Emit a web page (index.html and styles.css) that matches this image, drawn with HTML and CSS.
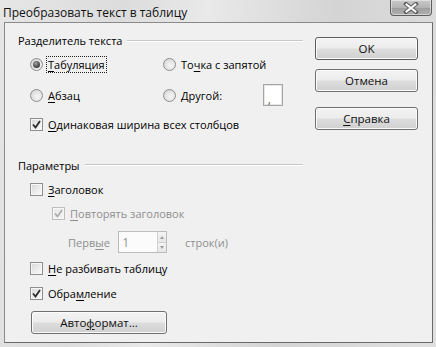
FILE: index.html
```html
<!DOCTYPE html>
<html lang="ru">
<head>
<meta charset="utf-8">
<title>Преобразовать текст в таблицу</title>
<link rel="stylesheet" href="styles.css">
</head>
<body>
<div class="window">
  <div class="titlebar">
    <span class="title">Преобразовать текст в таблицу</span>
    <span class="close">
      <svg width="16" height="12" viewBox="0 0 16 12"><path d="M3 2 L13 10 M13 2 L3 10" stroke="#5a5a5a" stroke-width="4" stroke-linecap="square"/><path d="M3.5 2.5 L12.5 9.5 M12.5 2.5 L3.5 9.5" stroke="#ffffff" stroke-width="2" stroke-linecap="square"/></svg>
    </span>
  </div>
  <div class="client">
    <div class="options">
      <div class="group-head head1"><span>Разделитель текста</span><span class="rule"></span></div>

      <div class="row r1">
        <span class="opt col1"><span class="radio checked"></span><span class="focus"><u>Т</u>абуляция</span></span>
        <span class="opt col2"><span class="radio"></span><span>То<u>ч</u>ка с запятой</span></span>
      </div>

      <div class="row r2">
        <span class="opt col1"><span class="radio"></span><span><u>А</u>бзац</span></span>
        <span class="opt col2"><span class="radio"></span><span><u>Д</u>ругой:</span></span>
        <span class="textbox">,</span>
      </div>

      <div class="row r3">
        <span class="opt"><span class="check on"><svg width="9" height="9" viewBox="0 0 9 9"><path d="M1 4.5 L3.5 7.5 L8 1" fill="none" stroke="#2b2b2b" stroke-width="1.8"/></svg></span><span><u>О</u>динаковая ширина всех столбцов</span></span>
      </div>

      <div class="group-head head2"><span>Параметры</span><span class="rule"></span></div>

      <div class="row r4">
        <span class="opt"><span class="check"></span><span><u>З</u>аголовок</span></span>
      </div>

      <div class="row r5 disabled">
        <span class="opt"><span class="check dis"><svg width="9" height="9" viewBox="0 0 9 9"><path d="M1 4.5 L3.5 7.5 L8 1" fill="none" stroke="#a8a8a8" stroke-width="1.6"/></svg></span><span><u>П</u>овторять заголовок</span></span>
      </div>

      <div class="row r6 disabled">
        <span class="first-label">Перв<u>ы</u>е</span>
        <span class="spin"><span class="spin-val">1</span><span class="spin-btns"><span class="sb up"></span><span class="sb down"></span></span></span>
        <span class="rows-label">строк(и)</span>
      </div>

      <div class="row r7">
        <span class="opt"><span class="check"></span><span><u>Н</u>е разбивать таблицу</span></span>
      </div>

      <div class="row r8">
        <span class="opt"><span class="check on"><svg width="9" height="9" viewBox="0 0 9 9"><path d="M1 4.5 L3.5 7.5 L8 1" fill="none" stroke="#2b2b2b" stroke-width="1.8"/></svg></span><span>Обра<u>м</u>ление</span></span>
      </div>

      <div class="row r9">
        <span class="btn autoformat">Авто<u>ф</u>ормат...</span>
      </div>
    </div>

    <div class="actions">
      <span class="btn ok">OK</span>
      <span class="btn cancel">Отмена</span>
      <span class="btn help"><u>С</u>правка</span>
    </div>
  </div>
</div>
</body>
</html>
```

FILE: styles.css
```css
* { box-sizing: border-box; }
html, body { margin: 0; padding: 0; }
body {
  width: 436px;
  height: 347px;
  overflow: hidden;
  font-family: "Open Sans", "Noto Sans", sans-serif;
  font-size: 11px;
  color: #000;
  background: #dcdcdc;
}
u { text-decoration: underline; text-underline-offset: 2px; }

.window {
  width: 436px;
  height: 347px;
  display: flex;
  flex-direction: column;
  padding: 0 3px 4px 4px;
  background: linear-gradient(100deg, #e6e6e6 0%, #dcdcdc 25%, #e9e9e9 42%, #d4d4d4 68%, #e0e0e0 100%);
}

.titlebar {
  height: 22px;
  display: flex;
  justify-content: space-between;
  align-items: flex-start;
}
.title {
  margin-left: -1px;
  padding-top: 4px;
  line-height: 17px;
  font-size: 12px;
  color: #111;
}
.close {
  width: 42px;
  height: 16px;
  margin-right: 1px;
  border: 1px solid #5e5e5e;
  border-top: none;
  border-radius: 0 0 4px 4px;
  background: linear-gradient(#c9c9c9 0%, #b4b4b4 50%, #9d9d9d 51%, #b0b0b0 100%);
  box-shadow: inset 0 0 0 1px rgba(255,255,255,0.45);
  display: flex;
  align-items: center;
  justify-content: center;
}

.client {
  flex: 1;
  display: flex;
  background: #f0f0f0;
  border: 1px solid #8a8a8a;
  border-right-color: #6a6a6a;
  border-bottom-color: #6a6a6a;
}

.options {
  width: 298px;
  padding: 8px 0 0 13px;
  display: flex;
  flex-direction: column;
}

.group-head {
  height: 19px;
  display: flex;
  align-items: center;
  gap: 5px;
  white-space: nowrap;
}
.group-head .rule {
  flex: 1;
  height: 1px;
  background: #c8c8c8;
  border-bottom: 1px solid #fff;
  box-sizing: content-box;
}

.row {
  display: flex;
  align-items: center;
  height: 20px;
  margin-left: 12px;
  white-space: nowrap;
}
.r1 { margin-top: 4px; }
.r2 { margin-top: 10px; height: 22px; }
.r3 { margin-top: 8px; }
.head2 { margin-top: 21px; height: 20px; }
.r4 { margin-top: 4px; }
.r5 { margin-top: 4px; margin-left: 34px; }
.r6 { margin-top: 8px; height: 22px; margin-left: 50px; }
.r7 { margin-top: 5px; }
.r8 { margin-top: 5px; }
.r9 { margin-top: 8px; height: 23px; margin-left: 13px; }

.opt {
  display: flex;
  align-items: center;
  gap: 5px;
}
.col1 { width: 133px; flex: none; }
.col2 { width: 100px; flex: none; }

.focus {
  outline: 1px dotted #222;
  outline-offset: 0;
  padding: 0 1px;
  margin-left: -1px;
  line-height: 15px;
}

.radio {
  width: 13px;
  height: 13px;
  flex: none;
  border-radius: 50%;
  border: 1px solid #8e8e8e;
  background: radial-gradient(circle at 60% 60%, #f6f6f6 0%, #e2e2e2 55%, #cdcdcd 100%);
  position: relative;
}
.radio.checked::after {
  content: "";
  position: absolute;
  left: 2px;
  top: 2px;
  width: 7px;
  height: 7px;
  border-radius: 50%;
  background: radial-gradient(circle at 40% 35%, #a0a0a0 0%, #4a4a4a 60%, #2a2a2a 100%);
}

.textbox {
  flex: none;
  width: 20px;
  height: 22px;
  border: 1px solid #a5a5a5;
  background: #fff;
  box-shadow: inset 0 0 0 1px #e6e6e6;
  font-size: 10px;
  line-height: 10px;
  padding: 10px 0 0 4px;
  color: #333;
}

.check {
  width: 13px;
  height: 13px;
  flex: none;
  border: 1px solid #8e8e8e;
  background: linear-gradient(135deg, #d6d6d6 0%, #ececec 55%, #fbfbfb 100%);
  box-shadow: inset 0 0 0 1px #f6f6f6;
  display: flex;
  align-items: center;
  justify-content: center;
}
.check.dis {
  border-color: #bdbdbd;
  background: linear-gradient(135deg, #e8e8e8 0%, #f3f3f3 100%);
}

.disabled { color: #8f8f8f; }
.first-label { width: 50px; flex: none; }
.spin {
  flex: none;
  width: 49px;
  height: 22px;
  border: 1px solid #bcbcbc;
  background: #fbfbfb;
  display: flex;
  align-items: stretch;
}
.spin-val {
  flex: 1;
  padding-left: 3px;
  line-height: 20px;
  font-size: 13px;
  color: #9a9a9a;
}
.spin-btns {
  width: 9px;
  display: flex;
  flex-direction: column;
  border-left: 1px solid #d2d2d2;
}
.sb {
  flex: 1;
  position: relative;
  background: linear-gradient(#f4f4f4, #e6e6e6);
}
.sb.up { border-bottom: 1px solid #d2d2d2; }
.sb::after {
  content: "";
  position: absolute;
  left: 2px;
  border-left: 2px solid transparent;
  border-right: 2px solid transparent;
}
.sb.up::after { top: 4px; border-bottom: 3px solid #9c9c9c; }
.sb.down::after { top: 3px; border-top: 3px solid #9c9c9c; }
.rows-label { margin-left: 18px; }

.actions {
  width: 103px;
  margin-left: 12px;
  padding-top: 14px;
  display: flex;
  flex-direction: column;
}
.btn {
  height: 23px;
  border: 1px solid #707070;
  border-radius: 3px;
  background: linear-gradient(#f3f3f3 0%, #ececec 48%, #dddddd 52%, #d0d0d0 100%);
  box-shadow: inset 0 0 0 1px #fbfbfb;
  display: flex;
  align-items: center;
  justify-content: center;
  color: #111;
  font-size: 11.5px;
}
.ok { border-color: #5c5c5c; }
.cancel { margin-top: 9px; }
.help { margin-top: 15px; }
.autoformat { width: 136px; }
```
